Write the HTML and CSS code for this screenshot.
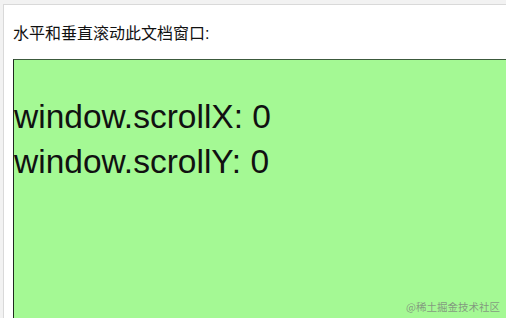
FILE: index.html
```html
<!DOCTYPE html>
<html lang="zh">
<head>
<meta charset="utf-8">
<link rel="stylesheet" href="styles.css">
</head>
<body>
<div class="frame">
  <div class="doc">
    <p class="intro">水平和垂直滚动此文档窗口:</p>
    <div class="box">
      <div class="line">window.scrollX: 0</div>
      <div class="line">window.scrollY: 0</div>
    </div>
  </div>
  <div class="mark">@稀土掘金技术社区</div>
</div>
</body>
</html>
```
FILE: styles.css
```css
html, body {
  margin: 0;
  padding: 0;
  width: 506px;
  height: 318px;
  overflow: hidden;
}
body {
  background: #f2f2f2;
  font-family: "Liberation Sans", "Noto Sans CJK SC", sans-serif;
}
.frame {
  position: relative;
  height: 318px;
  padding: 4px 0 0 3px;
  box-sizing: border-box;
}
.doc {
  background: #fff;
  border-top: 1px solid #d9d9d9;
  border-left: 1px solid #d9d9d9;
  height: 100%;
  box-sizing: border-box;
  padding: 0 0 0 9px;
  overflow: hidden;
}
.intro {
  margin: 0;
  padding-top: 18px;
  font-size: 16px;
  line-height: 22px;
  color: #111;
  font-family: "Liberation Sans", "Noto Sans CJK SC", sans-serif;
}
.box {
  margin-top: 14px;
  width: 1000px;
  height: 600px;
  background: #a4f994;
  border: 1px solid #1e2a1e;
  border-top-color: #3c5a3c;
  padding-top: 34px;
  box-sizing: border-box;
}
.line {
  font-size: 33.5px;
  line-height: 45px;
  color: #111;
}
.mark {
  position: absolute;
  right: 6px;
  bottom: 4px;
  font-size: 10.5px;
  color: rgba(120, 120, 120, 0.75);
  font-family: "Noto Sans CJK SC", sans-serif;
}
```
